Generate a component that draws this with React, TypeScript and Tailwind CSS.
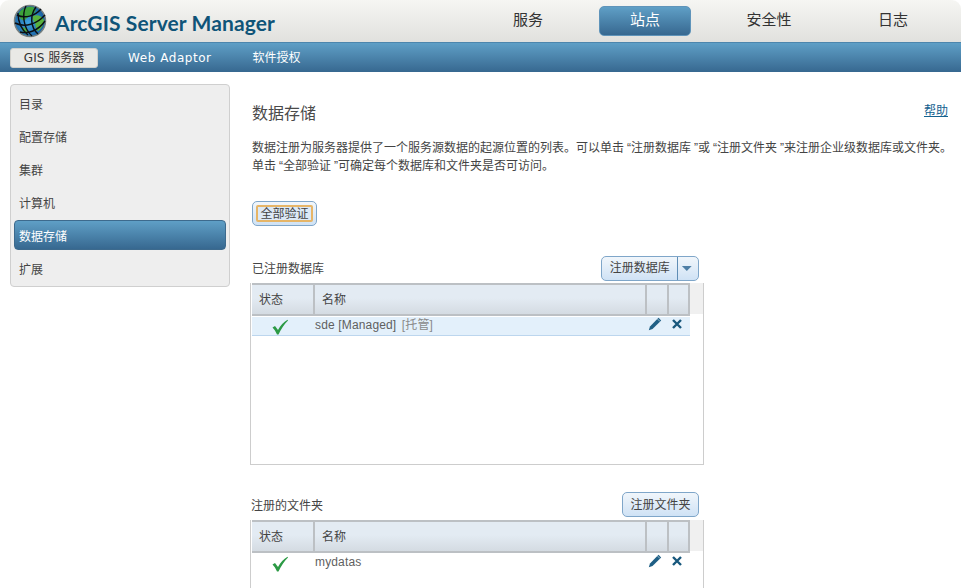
import React from "react";

const cjk = "font-['Liberation_Sans','Noto_Sans_CJK_SC',sans-serif]";
const blue = "bg-[linear-gradient(#5f9fc6,#376890)]";

function Globe() {
  return (
    <svg width="34" height="34" viewBox="0 0 34 34" className="shrink-0">
      <defs>
        <radialGradient id="g" cx="45%" cy="55%" r="60%">
          <stop offset="0%" stopColor="#3fa4e0" />
          <stop offset="100%" stopColor="#14589a" />
        </radialGradient>
      </defs>
      <circle cx="17" cy="17" r="15.5" fill="url(#g)" stroke="#77807f" strokeWidth="1.5" />
      <path d="M6 9c3-5 9-7 14-6 4 2 3 6-1 7-2 3-5 3-7 6-3 1-6-1-6-7z" fill="#3da33a" />
      <path d="M20 12c4-2 9 0 11 4 0 5-3 9-6 11-3-2-2-6-3-8-2-2-3-5-2-7z" fill="#59b23d" />
      <path d="M9 24c2-1 5 0 6 2l-2 4c-2-1-4-3-4-6z" fill="#4da83c" />
      <g fill="none" stroke="#0b0f14" strokeWidth="1.4">
        <path d="M4 11c8 4 18 1 24-6" />
        <path d="M2 19c10 5 22 1 30-8" />
        <path d="M7 28c8 2 18-1 25-11" />
        <path d="M13 2c-4 8-3 22 6 30" />
        <path d="M23 3c-6 8-6 20 2 27" />
        <path d="M5 9c0 9 4 17 10 22" />
      </g>
    </svg>
  );
}

function Check() {
  return (
    <svg width="18" height="16" viewBox="0 0 18 16" className="block">
      <path d="M1.500 8.500 L4 7 L7 11 C9.500 6.500 12.500 3 16.500 .8 L17 1.400 C13 5 10.500 9.500 7.500 15.500 L6 15.500 C4.800 12.500 3.200 10.300 1.500 8.500Z" fill="#2c9a45" />
    </svg>
  );
}

function Pencil() {
  return (
    <svg width="14" height="14" viewBox="0 0 14 14" className="block">
      <path d="M10.500 .8 L13.200 3.500 L4.500 12 L.8 13.200 L2 9.400Z" fill="#1f5f85" />
      <path d="M9.500 2 L12 4.500" stroke="#cfe2ee" strokeWidth=".7" />
    </svg>
  );
}

function Cross() {
  return (
    <svg width="12" height="12" viewBox="0 0 12 12" className="block">
      <path d="M2 2 L10 10 M10 2 L2 10" stroke="#17577c" strokeWidth="2.400" />
    </svg>
  );
}

const hCell = "h-[31px] border-b-2 border-r-2 border-[#bcc0c4] bg-[linear-gradient(#e3ebf3_45%,#d4dbe2)] flex items-center text-[12px] text-[#444]";

function Table({ name, selected, fixedHeight }: { name: React.ReactNode; selected?: boolean; fixedHeight: string }) {
  const rowBg = selected ? "bg-[#e3f0fb] border-b border-[#bcd6ee]" : "";
  return (
    <div className={`w-[454px] border-l border-[#cdcdcd] pl-[1px] ${fixedHeight}`}>
      <div className="flex">
        <div className="flex w-[438px] border-t-2 border-[#bcc0c4]">
          <div className={`${hCell} w-[63px] pl-[7px]`}>状态</div>
          <div className={`${hCell} w-[332px] pl-[7px]`}>名称</div>
          <div className={`${hCell} w-[22px]`} />
          <div className={`${hCell} w-[21px]`} />
        </div>
        <div className="h-[31px] flex-1 bg-[#f0f0f0]" />
      </div>
      <div className={`mt-[1px] flex w-[438px] h-[19px] ${rowBg}`}>
        <div className="w-[63px] flex justify-center pr-[7px] pt-[2px]"><Check /></div>
        <div className="w-[332px] text-[12px] leading-[16px] text-[#5f5f5f] tracking-[0.15px]">{name}</div>
        <div className="w-[22px] flex justify-center pr-[7px]"><Pencil /></div>
        <div className="w-[21px] flex justify-center pr-[6px] pt-[1px]"><Cross /></div>
      </div>
    </div>
  );
}

function Btn({ children, className = "" }: { children: React.ReactNode; className?: string }) {
  return (
    <div className={`h-[25px] border border-[#7fa6c9] rounded-[5px] bg-[linear-gradient(#f1f6fb,#cfe2f5)] text-[12px] text-[#444] flex items-center ${className}`}>
      {children}
    </div>
  );
}

function Q({ c }: { c: string }) {
  return <span className="ml-[3px] leading-none font-['Liberation_Sans',sans-serif]">{c}</span>;
}

export default function App() {
  const side = ["目录", "配置存储", "集群", "计算机", "数据存储", "扩展"];
  return (
    <div className={`h-[588px] w-[961px] overflow-hidden bg-white ${cjk}`}>
      <header className="h-[42px] rounded-t-[9px] bg-[linear-gradient(#f6f6f3,#e1e1de)] flex items-center">
        <div className="ml-[13px] flex items-center gap-[8px]">
          <Globe />
          <span className="text-[21px] font-bold tracking-[0.1px] text-[#0f5478] font-['Lato','Liberation_Sans',sans-serif] leading-none pt-[3px]">ArcGIS Server Manager</span>
        </div>
        <nav className="ml-auto mr-[22px] flex text-[15px] text-[#333] items-center">
          <div className="w-[92px] text-center mb-[2px]">服务</div>
          <div className={`ml-[25px] mr-[32px] w-[92px] h-[30px] pb-[2px] rounded-[5px] border border-[#5f94ba] ${blue} text-white flex items-center justify-center`}>站点</div>
          <div className="w-[92px] text-center mb-[2px]">安全性</div>
          <div className="ml-[32px] w-[92px] text-center mb-[2px]">日志</div>
        </nav>
      </header>
      <div className={`h-[30px] border-t border-[#4d86ad] ${blue} flex items-center pl-[10px] text-[12px] text-white font-['DejaVu_Sans','Noto_Sans_CJK_SC',sans-serif]`}>
        <div className="w-[88px] h-[20px] rounded-[3px] bg-[#e9e9e6] border border-[#d0d0cc] text-[#333] flex items-center justify-center">GIS 服务器</div>
        <div className="ml-[30px] font-medium tracking-[0.55px]">Web Adaptor</div>
        <div className="ml-[41px]">软件授权</div>
      </div>
      <div className="flex items-start">
        <aside className="mt-[12px] ml-[10px] w-[220px] h-[203px] rounded-[4px] border border-[#cfcfcf] bg-[#eeeeee] px-[3px] pt-[3px] text-[12px] text-[#444]">
          {side.map((s) =>
            s === "数据存储" ? (
              <div key={s} className={`h-[30px] mb-[3px] pt-[3px] rounded-[4px] border border-[#3d6a8d] ${blue} text-white flex items-center pl-[4px]`}>{s}</div>
            ) : (
              <div key={s} className="h-[33px] flex items-center pl-[5px]">{s}</div>
            )
          )}
        </aside>
        <main className="ml-[20px] flex-1">
          <div className="pt-[30px] pl-[2px] flex items-start justify-between pr-[13px]">
            <h1 className="text-[16px] leading-[24px] text-[#4a4a4a]">数据存储</h1>
            <a className="mt-[1px] text-[12px] leading-[16px] text-[#14628f] underline">帮助</a>
          </div>
          <p className="mt-[12px] pl-[2px] text-[12px] leading-[18px] text-[#444] font-['Noto_Sans_CJK_SC',sans-serif]">
            数据注册为服务器提供了一个服务源数据的起源位置的列表。可以单击<Q c="“" />注册数据库<Q c="”" />或<Q c="“" />注册文件夹<Q c="”" />来注册企业级数据库或文件夹。
            <br />
            单击<Q c="“" />全部验证<Q c="”" />可确定每个数据库和文件夹是否可访问。
          </p>
          <Btn className="mt-[27px] ml-[2px] w-[65px] justify-center">
            <span className="h-[17px] w-[57px] text-center leading-[14px] border-2 border-[#e6b567] rounded-[2px] bg-[#dce9f6]">全部验证</span>
          </Btn>
          <div className="mt-[30px] mb-[2px] w-[449px] flex items-center justify-between pl-[2px]">
            <span className="text-[12px] leading-[18px] text-[#444]">已注册数据库</span>
            <Btn className="w-[98px]">
              <span className="w-[78px] text-center border-r border-[#5f8db5] h-full leading-[23px]">注册数据库</span>
              <svg width="20" height="8" viewBox="0 0 20 8"><path d="M4 1h10l-5 5z" fill="#4f7fa6" /></svg>
            </Btn>
          </div>
          <Table fixedHeight="h-[182px] border-r border-b" selected name={<>sde [Managed] <span className="text-[#8a8a8a] ml-[2px]">[托管]</span></>} />
          <div className="mt-[27px] mb-[3px] w-[449px] flex items-center justify-between pl-[1px]">
            <span className="text-[12px] leading-[18px] pt-[3px] text-[#444]">注册的文件夹</span>
            <Btn className="w-[77px] justify-center">注册文件夹</Btn>
          </div>
          <Table fixedHeight="h-[70px] border-r" name="mydatas" />
        </main>
      </div>
    </div>
  );
}
